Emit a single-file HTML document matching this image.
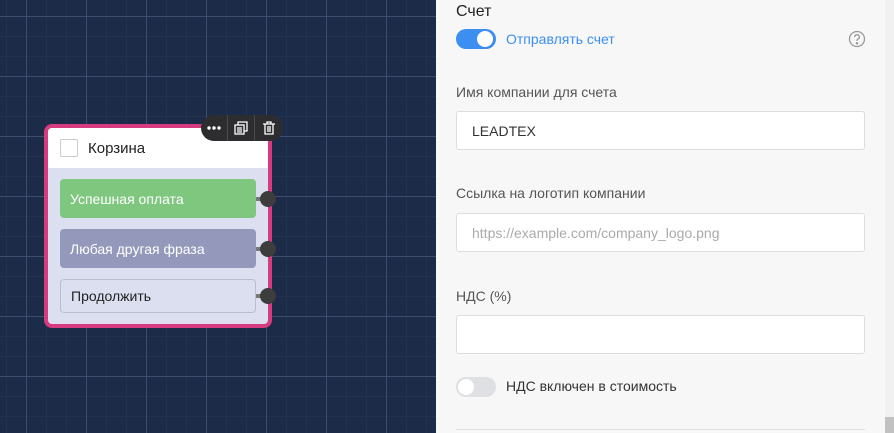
<!DOCTYPE html>
<html><head><meta charset="utf-8"><style>
*{box-sizing:border-box;margin:0;padding:0}
body{width:894px;height:433px;overflow:hidden;position:relative;font-family:"Liberation Sans",sans-serif;
background-color:#1c2b48;
background-image:linear-gradient(to right,#3b4e70 1px,transparent 1px),linear-gradient(to bottom,#3b4e70 1px,transparent 1px),linear-gradient(to right,#22324f 1px,transparent 1px),linear-gradient(to bottom,#22324f 1px,transparent 1px);
background-size:60px 60px,60px 60px,20px 20px,20px 20px;background-position:26px 16px,26px 16px,6px 16px,6px 16px}
.card{position:absolute;left:44px;top:124px;width:228px;height:204px;border:4px solid #d63a7f;border-radius:8px;background:#dcdff0;overflow:visible}
.hdr{height:40px;background:#fff;border-radius:4px 4px 0 0;display:flex;align-items:center;padding-left:12px;font-size:15px;color:#222}
.cb{width:18px;height:18px;border:1px solid #ccc;border-radius:2px;margin-right:10px;background:#fff}
.btn{position:absolute;left:12px;width:196px;height:39px;border-radius:4px;font-size:14px;display:flex;align-items:center;padding-left:10px}
.dot{position:absolute;right:-8px;width:16px;height:16px;border-radius:50%;background:#3d3d3d}
.stub{position:absolute;left:208px;width:8px;height:4px;background:#777}
.tb{position:absolute;left:201px;top:115px;width:82px;height:26px;background:#2d2d2f;border-radius:13px;display:flex;align-items:center}
.tb div{width:27px;height:26px;display:flex;align-items:center;justify-content:center;border-right:1px solid #4a4a4a}
.tb div:last-child{border:none}
.panel{position:absolute;left:436px;top:0;width:449px;height:433px;background:#f7f7f7}
.sb{position:absolute;left:885px;top:0;width:9px;height:433px;background:#f1f1f1}
.lbl{position:absolute;left:20px;font-size:14px;color:#555}
.inp{position:absolute;left:20px;width:409px;height:39px;background:#fff;border:1px solid #ddd;border-radius:3px;font-size:14px;padding-left:15px;display:flex;align-items:center;color:#333}
</style></head><body>
<div class="card">
 <div class="hdr"><div class="cb"></div>Корзина</div>
 <div class="btn" style="top:51px;background:#7fc67f;color:#fff">Успешная оплата</div>
 <div class="btn" style="top:101px;background:#9499bb;color:#fff">Любая другая фраза</div>
 <div class="btn" style="top:151px;height:34px;background:#dcdff0;border:1px solid #b9bdd3;color:#222">Продолжить</div>
 <div class="stub" style="top:69px"></div>
 <div class="stub" style="top:119px"></div>
 <div class="stub" style="top:166px"></div>
 <div class="dot" style="top:63px"></div>
 <div class="dot" style="top:113px"></div>
 <div class="dot" style="top:160px"></div>
</div>
<div class="tb">
 <div><svg width="14" height="4"><circle cx="2" cy="2" r="1.7" fill="#fff"/><circle cx="7" cy="2" r="1.7" fill="#fff"/><circle cx="12" cy="2" r="1.7" fill="#fff"/></svg></div>
 <div><svg width="14" height="14" fill="none" stroke="#fff" stroke-width="1.3"><rect x="1" y="4" width="9" height="9"/><path d="M4 4V1h9v9h-3M3 7h5M3 9h5M3 11h5"/></svg></div>
 <div><svg width="14" height="14" fill="none" stroke="#fff" stroke-width="1.3"><path d="M1 3h12M5 3V1h4v2M3 3v10h8V3M6 5v6M8 5v6"/></svg></div>
</div>
<div class="panel">
 <div style="position:absolute;left:20px;top:3px;font-size:16px;color:#222">Счет</div>
 <div style="position:absolute;left:20px;top:29px;width:40px;height:20px;border-radius:10px;background:#3c8ff0"><div style="position:absolute;right:3px;top:2px;width:16px;height:16px;border-radius:50%;background:#fff"></div></div>
 <div style="position:absolute;left:70px;top:31px;font-size:14px;color:#3c8ff0">Отправлять счет</div>
 <svg style="position:absolute;left:412px;top:30px" width="18" height="18" fill="none" stroke="#999" stroke-width="1.3"><circle cx="9" cy="9" r="7.5"/><path d="M6.7 7a2.3 2.3 0 1 1 3.2 2.1c-.6.3-.9.7-.9 1.4v.5"/><circle cx="9" cy="13.3" r=".6" fill="#999"/></svg>
 <div class="lbl" style="top:84px">Имя компании для счета</div>
 <div class="inp" style="top:111px">LEADTEX</div>
 <div class="lbl" style="top:185px">Ссылка на логотип компании</div>
 <div class="inp" style="top:213px;color:#aaa">https://example.com/company_logo.png</div>
 <div class="lbl" style="top:288px">НДС (%)</div>
 <div class="inp" style="top:315px"></div>
 <div style="position:absolute;left:20px;top:377px;width:40px;height:20px;border-radius:10px;background:#dfe0e4"><div style="position:absolute;left:2px;top:2px;width:16px;height:16px;border-radius:50%;background:#fff"></div></div>
 <div style="position:absolute;left:70px;top:378px;font-size:14px;color:#333">НДС включен в стоимость</div>
 <div style="position:absolute;left:20px;top:429px;width:409px;height:1px;background:#ddd"></div>
</div>
<div class="sb"><div style="position:absolute;left:0;top:417px;width:9px;height:16px;background:#c1c1c1"></div></div>
</body></html>
